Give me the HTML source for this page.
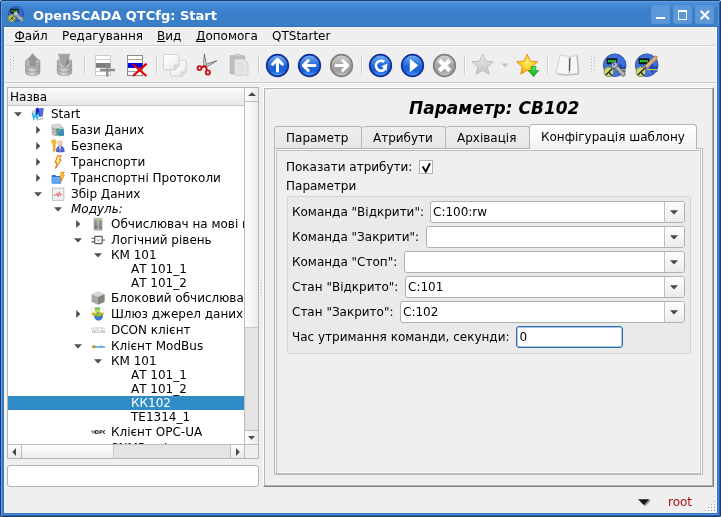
<!DOCTYPE html>
<html><head><meta charset="utf-8"><title>OpenSCADA QTCfg: Start</title>
<style>
html,body{margin:0;padding:0;}
body{width:721px;height:517px;overflow:hidden;background:#fff;font-family:"DejaVu Sans","Liberation Sans",sans-serif;font-size:12px;color:#000;position:relative;}
.abs{position:absolute;}
#root{position:absolute;left:0;top:0;width:721px;height:517px;will-change:transform;}
.t{position:absolute;white-space:nowrap;line-height:16px;height:16px;}
svg{display:block;}
u{text-decoration:underline;text-decoration-skip-ink:none;text-underline-offset:1px;}
#frame{left:0;top:0;width:721px;height:517px;background:#3a7ec8;border-radius:3px 3px 2px 2px;overflow:hidden;}
#titlebar{left:0;top:0;width:721px;height:27px;background:linear-gradient(#4a90dc 2px,#3b7fca 11px,#3a7ec8 26px,#2e74c4 26px);}
#title{left:33px;top:8px;color:#fff;font-weight:bold;font-size:13px;}
.wbtn{top:4.500px;width:19.600px;height:19.600px;border:0;box-shadow:inset 0 0 0 1px #5a93d4;border-radius:3.500px;background:#5e97d7;box-sizing:border-box;}
#client{left:4px;top:27px;width:713px;height:486px;background:#efefef;box-sizing:border-box;border:1px solid #f8f6f4;}
.menu{top:28px;}
.frame{box-sizing:border-box;border:1px solid #b6b6b6;}
.combo{position:absolute;box-sizing:border-box;height:22px;border:1px solid #b0b0b0;border-radius:3px;background:#fff;}
.combo .btn{position:absolute;right:0;top:0;width:19px;height:20px;border-left:1px solid #c0c0c0;background:linear-gradient(#fdfdfd,#ececec);border-radius:0 2px 2px 0;}
.combo .btn svg{position:absolute;left:4.500px;top:8px;}
.combo span{position:absolute;left:2px;top:2px;line-height:16px;}
</style></head><body>
<div id="root">
<div class="abs" id="frame">
<div class="abs" id="titlebar"></div>
<div class="abs" style="left:0;top:0;width:721px;height:1px;background:#1c3d6a"></div>
<div class="abs" style="left:1px;top:1px;width:719px;height:1px;background:#62a4ea"></div>
<div class="abs" style="left:3px;top:27px;width:1px;height:487px;background:#2e74c4"></div>
<div class="abs" style="left:2px;top:3px;width:1px;height:512px;background:#3a80cc"></div>
<div class="abs" style="left:1px;top:1px;width:1px;height:515px;background:#5e9fe6"></div>
<div class="abs" style="left:717px;top:27px;width:1px;height:487px;background:#2e74c4"></div>
<div class="abs" style="left:4px;top:513px;width:714px;height:1px;background:#2e74c4"></div>
<div class="abs" style="left:718px;top:3px;width:1px;height:512px;background:#4a90dc"></div>
<div class="abs" style="left:3px;top:514px;width:716px;height:1px;background:#4a90dc"></div>
<div class="abs" style="left:719px;top:2px;width:1px;height:514px;background:#2b5c9c"></div>
<div class="abs" style="left:2px;top:515px;width:718px;height:1px;background:#2b5c9c"></div>
<div class="abs" style="left:0;top:0;width:1px;height:517px;background:#1c3d6a"></div>
<div class="abs" style="left:720px;top:0;width:1px;height:517px;background:#1c3d6a"></div>
<div class="abs" style="left:0;top:516px;width:721px;height:1px;background:#1c3d6a"></div>
</div>
<!-- app icon -->
<svg class="abs" style="left:7px;top:5px" width="18" height="18" viewBox="0 0 18 18"><circle cx="9" cy="9" r="7.600" fill="#3566d6" stroke="#2a4a9c" stroke-width=".8"/><rect x="3.400" y="3.700" width="8.400" height="4.800" rx=".8" fill="#0c1a10"/><path d="M4.600 6h6" stroke="#30d040" stroke-width="1.500" stroke-dasharray="1.600 .6"/><circle cx="4.700" cy="13.300" r="3.600" fill="#b6c25c" stroke="#7a8438" stroke-width=".6"/><path d="M2.600 15l4.200-3.600M4.700 13.300l2 1.800" stroke="#20281a" stroke-width=".9"/><path d="M9 9l5.800 6" stroke="#a4a4a4" stroke-width="2.800" stroke-linecap="round"/><circle cx="8.800" cy="8.800" r="2" fill="#c8c8c8" stroke="#8a8a8a" stroke-width=".5"/><path d="M11 13h5" stroke="#e0e040" stroke-width=".8"/></svg>
<div class="t" id="title">OpenSCADA QTCfg: Start</div>
<div class="abs wbtn" style="left:650.700px"><div class="abs" style="left:5.300px;top:12.500px;width:9px;height:2.300px;background:#fff"></div></div>
<div class="abs wbtn" style="left:672.600px"><div class="abs" style="left:5.300px;top:5.500px;width:9px;height:9.500px;box-sizing:border-box;border:1.300px solid #fff;border-top-width:2.200px"></div></div>
<div class="abs wbtn" style="left:694.600px"><svg class="abs" style="left:5.200px;top:5.500px" width="10" height="10" viewBox="0 0 10 10"><path d="M0.700 0.700l8.300 8.600M9 0.700l-8.300 8.600" stroke="#fff" stroke-width="2"/></svg></div>
<div class="abs" id="client"></div>
<!-- menubar -->
<div class="t menu" style="left:14.500px"><u>Ф</u>айл</div>
<div class="t menu" style="left:62px">Редагування</div>
<div class="t menu" style="left:157px"><u>В</u>ид</div>
<div class="t menu" style="left:196px"><u>Д</u>опомога</div>
<div class="t menu" style="left:272px">QTStarter</div>
<div class="abs" style="left:5px;top:45px;width:711px;height:1px;background:#d4d4d4"></div>
<div class="abs" style="left:5px;top:46px;width:711px;height:1px;background:#fbfbfb"></div>
<!-- toolbar -->
<svg class="abs" style="left:4px;top:47px" width="712" height="35" viewBox="4 47 712 35">
<defs>
<linearGradient id="gcyl" x1="0" x2="1" y1="0" y2="0"><stop offset="0" stop-color="#a4a4a4"/><stop offset=".45" stop-color="#d6d6d6"/><stop offset="1" stop-color="#989898"/></linearGradient>
<linearGradient id="gblue" x1="0" x2="0" y1="0" y2="1"><stop offset="0" stop-color="#78b0f4"/><stop offset=".5" stop-color="#2368d8"/><stop offset=".75" stop-color="#1a60d8"/><stop offset="1" stop-color="#4aa4f8"/></linearGradient>
<linearGradient id="ggrey" x1="0" x2="0" y1="0" y2="1"><stop offset="0" stop-color="#d4d4d4"/><stop offset=".5" stop-color="#a4a4a4"/><stop offset=".75" stop-color="#a0a0a0"/><stop offset="1" stop-color="#cccccc"/></linearGradient>
<radialGradient id="gstar" cx=".5" cy=".4" r=".6"><stop offset="0" stop-color="#fff460"/><stop offset=".5" stop-color="#ffd030"/><stop offset="1" stop-color="#f89808"/></radialGradient><linearGradient id="ggreen" x1="0" x2="0" y1="0" y2="1"><stop offset="0" stop-color="#58e860"/><stop offset="1" stop-color="#08a818"/></linearGradient>
<linearGradient id="gstarg" x1="0" x2="0" y1="0" y2="1"><stop offset="0" stop-color="#ececec"/><stop offset="1" stop-color="#c4c4c4"/></linearGradient>
<linearGradient id="gpage" x1="0" x2="1" y1="0" y2="1"><stop offset="0" stop-color="#ffffff"/><stop offset=".6" stop-color="#f4f4f4"/><stop offset="1" stop-color="#dcdcdc"/></linearGradient>
</defs>
<!-- handle 1 -->
<g fill="#b8b8b8"><rect x="10" y="56" width="1" height="1"/><rect x="13" y="57" width="1" height="1"/><rect x="10" y="59" width="1" height="1"/><rect x="13" y="60" width="1" height="1"/><rect x="10" y="62" width="1" height="1"/><rect x="13" y="63" width="1" height="1"/><rect x="10" y="65" width="1" height="1"/><rect x="13" y="66" width="1" height="1"/><rect x="10" y="68" width="1" height="1"/><rect x="13" y="69" width="1" height="1"/><rect x="10" y="71" width="1" height="1"/></g>
<!-- db up -->
<g>
<path d="M25.500 61v11.500c0 1.900 3.200 3.300 7.200 3.300s7.200-1.400 7.200-3.300V61z" fill="url(#gcyl)" stroke="#9a9a9a" stroke-width=".6"/>
<ellipse cx="32.700" cy="61" rx="7.200" ry="2.600" fill="#c4c4c4" stroke="#9a9a9a" stroke-width=".6"/>
<path d="M25.500 65c0 1.900 3.200 3.100 7.200 3.100s7.200-1.200 7.200-3.100M25.500 69c0 1.900 3.200 3.100 7.200 3.100s7.200-1.200 7.200-3.100" fill="none" stroke="#929292" stroke-width=".8"/>
<path d="M32.600 53.600l6 6.800h-2.800v6.400h-6.400v-6.400h-2.800z" fill="#959595" stroke="#a8a8a8" stroke-width=".5"/>
</g>
<!-- db down -->
<g>
<path d="M57.300 61v11.500c0 1.900 3.200 3.300 7.200 3.300s7.200-1.400 7.200-3.300V61z" fill="url(#gcyl)" stroke="#9a9a9a" stroke-width=".6"/>
<ellipse cx="64.500" cy="61" rx="7.200" ry="2.600" fill="#bcbcbc" stroke="#9a9a9a" stroke-width=".6"/>
<path d="M57.300 65c0 1.900 3.200 3.100 7.200 3.100s7.200-1.200 7.200-3.100M57.300 69c0 1.900 3.200 3.100 7.200 3.100s7.200-1.200 7.200-3.100" fill="none" stroke="#929292" stroke-width=".8"/>
<path d="M58 54h12.200l-2.400 6.200 2.200 0.800-5.400 7.200-5.600-7.200 1.600-.6z" fill="#a2a2a2" stroke="#b4b4b4" stroke-width=".5"/>
<path d="M68.600 54.500l-3.800 13.200 5-6.800-2-.6z" fill="#7e7e7e"/>
</g>
<rect x="84" y="56" width="1" height="18" fill="#cfcfcf"/><rect x="85" y="56" width="1" height="18" fill="#fbfbfb"/>
<!-- add row -->
<g>
<rect x="95.500" y="55.500" width="15" height="20" fill="#fff" stroke="#cccccc"/>
<path d="M95.500 59.500h15M95.500 63.500h15M95.500 67.500h15M95.500 71.500h15" stroke="#cccccc"/>
<rect x="96" y="63" width="14.500" height="4.800" fill="#7e7e7e"/>
<path d="M100 70h15M107.300 64v12.600" stroke="#8e8e8e" stroke-width="2.400"/>
</g>
<!-- del row -->
<g>
<rect x="127.500" y="55.500" width="15" height="20" fill="#fff" stroke="#8a8a8a"/>
<path d="M127.500 59.500h15M127.500 63.500h15M127.500 67.500h15M127.500 71.500h15" stroke="#a0a0a0"/>
<rect x="128" y="63" width="14.500" height="4.800" fill="#0000e6"/>
<path d="M132.800 64l13.600 12M146.600 63.600l-13.600 12.400" stroke="#e60000" stroke-width="2.200"/>
</g>
<rect x="156" y="56" width="1" height="18" fill="#cfcfcf"/><rect x="157" y="56" width="1" height="18" fill="#fbfbfb"/>
<!-- copy -->
<g stroke="#cecece" stroke-width=".8">
<path d="M171.500 61.500h15v11l-4.500 4h-10.500z" fill="#c8c8c8" stroke="none" opacity=".5"/>
<path d="M170.500 60.500h15.500v11.500l-4.500 4h-11z" fill="url(#gpage)"/>
<path d="M181.500 76v-4h4.500" fill="#dedede"/>
<path d="M164.500 55.500h15v10.500l-4.500 4.500h-10.500z" fill="#c8c8c8" stroke="none" opacity=".5"/>
<path d="M163.500 54.500h15.500v10.500l-4.500 4.500h-11z" fill="url(#gpage)"/>
<path d="M174.500 69.500v-4.500h4.500" fill="#dcdcdc"/>
</g>
<!-- scissors -->
<g>
<path d="M204.400 54l2.200 11.200-1.400 1.600-1.800-1.400z" fill="#dcdcdc" stroke="#505050" stroke-width=".7" stroke-linejoin="round"/>
<path d="M216.800 60.800l-10.400 6.400-1.600-1.200 3-2.400z" fill="#d4d4d4" stroke="#505050" stroke-width=".7" stroke-linejoin="round"/>
<path d="M201.600 67.200l4.400-1.200M207 70l-1.600-4.200" stroke="#c80c16" stroke-width="2"/>
<circle cx="199.500" cy="68.100" r="2" fill="none" stroke="#c80c16" stroke-width="1.800"/>
<circle cx="207.800" cy="72.400" r="2.100" fill="none" stroke="#c80c16" stroke-width="1.800"/>
</g>
<!-- paste -->
<g>
<rect x="230" y="55.500" width="15" height="18.500" rx="1" fill="#bebebe" stroke="#b0b0b0" stroke-width=".6"/>
<rect x="234.500" y="54.300" width="6" height="2.500" rx="1" fill="#d0d0d0" stroke="#b0b0b0" stroke-width=".5"/>
<path d="M234.500 59h9l4.500 3.500v12.800h-13.500z" fill="#e6e6e6" stroke="#c2c2c2" stroke-width=".6"/>
<path d="M237 63.500h6M237 66h8.500M237 68.500h8.500M237 71h8.500" stroke="#d4d4d4" stroke-width=".7"/>
</g>
<rect x="258" y="56" width="1" height="18" fill="#cfcfcf"/><rect x="259" y="56" width="1" height="18" fill="#fbfbfb"/>
<!-- up -->
<g>
<circle cx="277.500" cy="65.500" r="10.800" fill="url(#gblue)" stroke="#12309a" stroke-width="1.700"/>
<path d="M277.500 60v11M272.600 64.200l4.900-4.900 4.900 4.900" fill="none" stroke="#fff" stroke-width="3" stroke-linecap="round" stroke-linejoin="round"/>
</g>
<!-- left -->
<g>
<circle cx="309.500" cy="65.500" r="10.800" fill="url(#gblue)" stroke="#12309a" stroke-width="1.700"/>
<path d="M304 65.500h11M308.200 60.600l-4.900 4.900 4.900 4.900" fill="none" stroke="#fff" stroke-width="3" stroke-linecap="round" stroke-linejoin="round"/>
</g>
<!-- right grey -->
<g>
<circle cx="341.500" cy="65.500" r="10.800" fill="url(#ggrey)" stroke="#808080" stroke-width="1.700"/>
<path d="M336 65.500h11M342.800 60.600l4.900 4.900-4.900 4.900" fill="none" stroke="#fff" stroke-width="3" stroke-linecap="round" stroke-linejoin="round"/>
</g>
<rect x="361" y="56" width="1" height="18" fill="#cfcfcf"/><rect x="362" y="56" width="1" height="18" fill="#fbfbfb"/>
<!-- refresh -->
<g>
<circle cx="380.500" cy="65.500" r="10.800" fill="url(#gblue)" stroke="#12309a" stroke-width="1.700"/>
<path d="M384.200 61.900A5 5 0 1 0 384.600 69.200" fill="none" stroke="#fff" stroke-width="2.700"/>
<path d="M381.400 66.300l6-2.800-.8 7.400z" fill="#fff"/>
</g>
<!-- play -->
<g>
<circle cx="412.500" cy="65.500" r="10.800" fill="url(#gblue)" stroke="#12309a" stroke-width="1.700"/>
<path d="M409.800 58.800l8.400 6.700-8.400 6.700z" fill="#fff"/>
</g>
<!-- stop grey -->
<g>
<circle cx="444.500" cy="65.500" r="10.800" fill="url(#ggrey)" stroke="#808080" stroke-width="1.700"/>
<path d="M439.300 60.300l10.400 10.400M449.700 60.300l-10.400 10.400" fill="none" stroke="#fff" stroke-width="4.400"/>
</g>
<rect x="464" y="56" width="1" height="18" fill="#cfcfcf"/><rect x="465" y="56" width="1" height="18" fill="#fbfbfb"/>
<!-- star grey -->
<path d="M482.600 54.200l3 6.900 7.500.7-5.700 5 1.700 7.400-6.500-3.900-6.500 3.900 1.700-7.400-5.700-5 7.500-.7z" fill="url(#gstarg)" stroke="#b8b8b8" stroke-width=".9" stroke-linejoin="round"/>
<path d="M501.500 63.500h7l-3.500 3.700z" fill="#c2c2c2"/>
<!-- star yellow -->
<path d="M527.200 54.200l3 6.900 7.500.7-5.700 5 1.700 7.400-6.500-3.900-6.500 3.900 1.700-7.400-5.700-5 7.500-.7z" fill="url(#gstar)" stroke="#e88a10" stroke-width=".9" stroke-linejoin="round"/>
<path d="M531.200 66.400h4.600v4.200h2.800l-5.100 6-5.100-6h2.800z" fill="url(#ggreen)" stroke="#0c9018" stroke-width=".7" stroke-linejoin="round"/>
<rect x="547" y="56" width="1" height="18" fill="#cfcfcf"/><rect x="548" y="56" width="1" height="18" fill="#fbfbfb"/>
<!-- book -->
<g>
<path d="M556 74.800l11 1 11.600-1.200-.6-3z" fill="#b4b4b4"/>
<path d="M560.200 55l9.600 1.600 7.400-1 1.200 17.600-10.400 1.400-12.200-1.400z" fill="#f6f6f6" stroke="#cccccc" stroke-width=".8"/>
<path d="M577.200 55.800l1.400 17.600" stroke="#b8b8b8" stroke-width="1.300"/>
<path d="M569.800 57l-.6 16.600" stroke="#d0d0d0" stroke-width="2.400"/>
<path d="M569.900 58l-.4 13" stroke="#383838" stroke-width=".9"/>
</g>
<!-- handle 2 -->
<g fill="#b8b8b8"><rect x="591" y="56" width="1" height="1"/><rect x="594" y="57" width="1" height="1"/><rect x="591" y="59" width="1" height="1"/><rect x="594" y="60" width="1" height="1"/><rect x="591" y="62" width="1" height="1"/><rect x="594" y="63" width="1" height="1"/><rect x="591" y="65" width="1" height="1"/><rect x="594" y="66" width="1" height="1"/><rect x="591" y="68" width="1" height="1"/><rect x="594" y="69" width="1" height="1"/><rect x="591" y="71" width="1" height="1"/></g>
<!-- app icon 1 -->
<g>
<circle cx="614.7" cy="65.200" r="11.300" fill="#3f70de" stroke="#2c50ac" stroke-width=".9"/>
<path d="M618 66l3-2.500 1.500 4 3-3v8l-3-2.500-1.500 3.500-3-3z" fill="#2448b0"/>
<rect x="606.8" y="58.200" width="10.400" height="6" rx=".6" fill="#0c160e"/>
<path d="M608 61.200h8" stroke="#2fd83c" stroke-width="2.200" stroke-dasharray="1.700 .5"/>
<path d="M615 69.700h11" stroke="#e6e63c" stroke-width="1"/>
<circle cx="608.8" cy="71.800" r="4.800" fill="#ccd678" stroke="#7e8a3c" stroke-width=".8"/>
<path d="M605.6 75.200l6.600-6.400M608.8 72l3 3.600" stroke="#20241a" stroke-width="1.200"/>
<path d="M615.2 65.800l8 8.400" stroke="#505050" stroke-width="4.600" stroke-linecap="round"/>
<path d="M615.2 65.800l8 8.400" stroke="#b4b4b4" stroke-width="3.200" stroke-linecap="round"/>
<circle cx="614.4" cy="65" r="3.100" fill="#c0c0c0" stroke="#585858" stroke-width=".7"/>
<path d="M612.2 62.400l2.600 2.800" stroke="#3f70de" stroke-width="2"/>
</g>
<!-- app icon 2 -->
<g>
<circle cx="646.7" cy="65.200" r="11.300" fill="#3f70de" stroke="#2c50ac" stroke-width=".9"/>
<path d="M650 66l3-2.500 1.500 4 3-3v8l-3-2.500-1.500 3.500-3-3z" fill="#2448b0"/>
<rect x="638.8" y="58.200" width="10.400" height="6" rx=".6" fill="#0c160e"/>
<path d="M640 61.200h8" stroke="#2fd83c" stroke-width="2.200" stroke-dasharray="1.700 .5"/>
<path d="M647 69.700h11" stroke="#e6e63c" stroke-width="1"/>
<circle cx="640.8" cy="71.800" r="4.800" fill="#ccd678" stroke="#7e8a3c" stroke-width=".8"/>
<path d="M637.6 75.200l6.600-6.400M640.8 72l3 3.600" stroke="#20241a" stroke-width="1.200"/>
<path d="M645.6 67.400l10-9.600" stroke="#a07848" stroke-width="4.200" stroke-linecap="round"/>
<path d="M645.6 67.400l10-9.600" stroke="#d8b088" stroke-width="2.800" stroke-linecap="round"/>
<path d="M644 69.200l1.200-2.600 1.600 1.600z" fill="#303030"/>
</g>
</svg>

<div class="abs" style="left:5px;top:82px;width:711px;height:1px;background:#c8c8c8"></div>
<div class="abs" style="left:5px;top:83px;width:711px;height:1px;background:#f9f9f9"></div>
<!-- left tree -->
<div class="abs frame" style="left:7px;top:87px;width:252px;height:372px;background:#fff"></div>
<div class="abs" style="left:8px;top:88px;width:236px;height:17px;background:linear-gradient(#fcfcfc,#f2f2f2 50%,#e6e6e6);border-bottom:1px solid #c4c4c4"></div>
<div class="t" style="left:10px;top:89px">Назва</div>
<div class="abs" id="tree" style="left:8px;top:106px;width:236px;height:338px;overflow:hidden;background:#fff">
<svg class="abs" style="left:6px;top:6px" width="8" height="5" viewBox="0 0 8 5"><path d="M0 0.200h8L4 4.400z" fill="#505050"/></svg>
<div class="abs" style="left:23px;top:1px;width:14px;height:14px"><svg width="14" height="14" viewBox="0 0 16 16"><path d="M1 4l6-1.500v8L1 12z" fill="#d4d4d8"/><path d="M8 13.500l6-1.500v2l-6 1z" fill="#c0c0c4"/><path d="M5.500 1.500L8 0.500l2.500 4.500v7L8 8 5.500 10z" fill="#1228c0"/><path d="M9 1.500l5.500-.5-1 9.500-3.500 1z" fill="#4f6ce0"/><path d="M1.500 6.500l1.800 7 1.900-5 1.900 5 1.800-7" fill="none" stroke="#20b4e8" stroke-width="1.500"/></svg></div>
<div class="t" style="left:43px;top:0px;">Start</div>
<svg class="abs" style="left:28px;top:20px" width="5" height="8" viewBox="0 0 5 8"><path d="M0.200 0v8L4.400 4z" fill="#505050"/></svg>
<div class="abs" style="left:43px;top:17px;width:14px;height:14px"><svg width="14" height="14" viewBox="0 0 16 16"><path d="M0.800 4v8c0 1.600 2.600 2.800 5.800 2.800s5.800-1.200 5.800-2.800V4z" fill="#a8a8a8"/><path d="M0.800 6.800c0 1.600 2.600 2.600 5.800 2.600s5.800-1 5.800-2.600M0.800 9.800c0 1.600 2.600 2.600 5.800 2.600s5.800-1 5.800-2.600" fill="none" stroke="#e0e0e0" stroke-width=".8"/><ellipse cx="6.600" cy="4" rx="5.800" ry="2.600" fill="#d8d8d8" stroke="#9a9a9a" stroke-width=".5"/><path d="M6 6.500l8-1.500 0.500 7-8 2z" fill="#3fa84c"/><path d="M8.500 7.500l6-1 .5 8-6 .5z" fill="#3a8cb4"/><path d="M6.500 9l4.500-1v2.500l-4.500 1z" fill="#6a8cd8"/><path d="M9 6l5.500-1v1.300l-5.500 1z" fill="#b8d8ec"/></svg></div>
<div class="t" style="left:63px;top:16px;">Бази Даних</div>
<svg class="abs" style="left:28px;top:36px" width="5" height="8" viewBox="0 0 5 8"><path d="M0.200 0v8L4.400 4z" fill="#505050"/></svg>
<div class="abs" style="left:43px;top:33px;width:14px;height:14px"><svg width="14" height="14" viewBox="0 0 16 16"><path d="M3.300 0.800c1.600 0 2.700 1 2.700 2.300 0 1-.5 1.700-1.300 2.100v8.300l-1.200 1-1.300-1V12l.8-.7-.8-.8.800-.8-.8-.8V5.200C1.300 4.800.6 4.100.6 3.100.6 1.800 1.700.8 3.300.8z" fill="#f8c020" stroke="#c88a00" stroke-width=".6"/><circle cx="10.300" cy="4.600" r="2.700" fill="#f6d4b0" stroke="#c89868" stroke-width=".5"/><path d="M6 14.200c0-4 1.600-6.200 4.500-6.200s4.700 2.200 4.700 6.200c-1.500 1-7.700 1-9.200 0z" fill="#3c6ce0" stroke="#2040b0" stroke-width=".6"/><path d="M9.300 8.300h2l-.3 5.700h-1.400z" fill="#f4f4f4"/><path d="M10.300 8.600l.8 4.800-.8.900-.8-.9z" fill="#d82020"/></svg></div>
<div class="t" style="left:63px;top:32px;">Безпека</div>
<svg class="abs" style="left:28px;top:52px" width="5" height="8" viewBox="0 0 5 8"><path d="M0.200 0v8L4.400 4z" fill="#505050"/></svg>
<div class="abs" style="left:43px;top:49px;width:14px;height:14px"><svg width="14" height="14" viewBox="0 0 16 16"><path d="M7.500 0.800h4.200l-2.400 4.700h2.600L5.200 15.400l1.600-6.600H4.600z" fill="#fce040" stroke="#e06418" stroke-width="1"/><path d="M8.200 2h2l-2.200 4.500h1.800L7 11l.8-3.400H6.200z" fill="#fff8b0"/></svg></div>
<div class="t" style="left:63px;top:48px;">Транспорти</div>
<svg class="abs" style="left:28px;top:68px" width="5" height="8" viewBox="0 0 5 8"><path d="M0.200 0v8L4.400 4z" fill="#505050"/></svg>
<div class="abs" style="left:43px;top:65px;width:14px;height:14px"><svg width="14" height="14" viewBox="0 0 16 16"><path d="M0.800 5.500c0-.6.400-1 1-1h3l1 1.200h5.500v8.500H0.800z" fill="#2a6cd8"/><path d="M0.500 7.200h11.800l-.8 7.300H1.300z" fill="#5ea4f4"/><path d="M1 8l10.800-.3" stroke="#9cc8fc" stroke-width=".8"/><path d="M11.800 1.200h3.400l-1.800 3.800h2L10.600 13l1.300-5h-1.700z" fill="#fcd030" stroke="#e07018" stroke-width=".8"/></svg></div>
<div class="t" style="left:63px;top:64px;">Транспортні Протоколи</div>
<svg class="abs" style="left:26px;top:86px" width="8" height="5" viewBox="0 0 8 5"><path d="M0 0.200h8L4 4.400z" fill="#505050"/></svg>
<div class="abs" style="left:43px;top:81px;width:14px;height:14px"><svg width="14" height="14" viewBox="0 0 16 16"><rect x="1.700" y="1.200" width="13" height="14" fill="#f0f0f0" stroke="#b0b0b0" stroke-width=".9"/><path d="M3 9.500l1.500-1 1 1.500 1.500-3 1.200 4 1.300-5.500 1.300 4.500 1-2 1 1" fill="none" stroke="#e04050" stroke-width=".8"/></svg></div>
<div class="t" style="left:63px;top:80px;">Збір Даних</div>
<svg class="abs" style="left:46px;top:101px" width="8" height="5" viewBox="0 0 8 5"><path d="M0 0.200h8L4 4.400z" fill="#505050"/></svg>
<div class="t" style="left:63px;top:95px;font-style:italic;">Модуль:</div>
<svg class="abs" style="left:68px;top:114px" width="5" height="8" viewBox="0 0 5 8"><path d="M0.200 0v8L4.400 4z" fill="#505050"/></svg>
<div class="abs" style="left:83px;top:111px;width:14px;height:14px"><svg width="14" height="14" viewBox="0 0 16 16"><rect x="3.200" y="1.200" width="9.600" height="14" fill="#a6a6a6" stroke="#c4c4c4" stroke-width=".6"/><rect x="3.800" y="1.600" width="8.400" height="2" fill="#a8d090"/><path d="M5 4.500v9M7 4.500v9M9.400 4.500v9M11.400 4.500v9" stroke="#7c7c7c" stroke-width="1"/><path d="M8.200 4v10" stroke="#e0e0e0" stroke-width=".8"/><path d="M4 11.500h4M10 12.500h2" stroke="#606060" stroke-width="1.200"/></svg></div>
<div class="t" style="left:103px;top:110px;">Обчислювач на мові подібній до Java</div>
<svg class="abs" style="left:66px;top:132px" width="8" height="5" viewBox="0 0 8 5"><path d="M0 0.200h8L4 4.400z" fill="#505050"/></svg>
<div class="abs" style="left:83px;top:127px;width:14px;height:14px"><svg width="14" height="14" viewBox="0 0 16 16"><rect x="4.200" y="3.800" width="8.600" height="8.400" rx="1" fill="#f4f4f4" stroke="#585858" stroke-width="1.300"/><path d="M0.500 6h4M0.500 10.200h4M12.800 8h3.200" stroke="#585858" stroke-width="1.300"/><path d="M7 7.500c.5 1.500 2.500 1.500 3 0" fill="none" stroke="#707070" stroke-width=".8"/></svg></div>
<div class="t" style="left:103px;top:126px;">Логічний рівень</div>
<svg class="abs" style="left:86px;top:147px" width="8" height="5" viewBox="0 0 8 5"><path d="M0 0.200h8L4 4.400z" fill="#505050"/></svg>
<div class="t" style="left:103px;top:141px;">КМ 101</div>
<div class="t" style="left:123px;top:155px;">АТ 101_1</div>
<div class="t" style="left:123px;top:169px;">АТ 101_2</div>
<div class="abs" style="left:83px;top:185px;width:14px;height:14px"><svg width="14" height="14" viewBox="0 0 16 16"><path d="M8 0.600l7.400 3.200v8.400L8 15.600 0.600 12.200V3.800z" fill="#a8a8a4"/><path d="M8 0.600l7.400 3.200L8 7.200 0.600 3.800z" fill="#d6d6d2"/><path d="M8 7.200l7.400-3.400v8.400L8 15.600z" fill="#84847f"/></svg></div>
<div class="t" style="left:103px;top:184px;">Блоковий обчислювач</div>
<svg class="abs" style="left:68px;top:204px" width="5" height="8" viewBox="0 0 5 8"><path d="M0.200 0v8L4.400 4z" fill="#505050"/></svg>
<div class="abs" style="left:83px;top:201px;width:14px;height:14px"><svg width="14" height="14" viewBox="0 0 16 16"><rect x="0.500" y="0.500" width="14" height="9" fill="none" stroke="#f8c8d8" stroke-width=".5"/><circle cx="8.600" cy="10.600" r="5" fill="#3c78d8"/><path d="M5 10c1.500-2 4.500-2.500 6.500-.5-1 2.500-4.500 3.500-6.500.5z" fill="#58b048"/><rect x="4.200" y="0.600" width="6.200" height="2.600" fill="#50d040"/><rect x="4.200" y="3.400" width="6.200" height="2.400" fill="#c8dc50"/><rect x="0.800" y="6.400" width="13.600" height="3" fill="#d0d428"/><path d="M2 8h2.500M6 8h3.500M11 8h2.500" stroke="#787818" stroke-width="1"/></svg></div>
<div class="t" style="left:103px;top:200px;">Шлюз джерел даних</div>
<div class="abs" style="left:83px;top:217px;width:14px;height:14px"><svg width="14" height="14" viewBox="0 0 16 16"><text x="8.500" y="6.800" font-size="2.800" text-anchor="middle" fill="#a0a0a0" font-family="DejaVu Sans">ADVANTECH</text><text x="8.500" y="11.600" font-size="5" text-anchor="middle" fill="#8c8c8c" font-family="DejaVu Sans">DCON</text></svg></div>
<div class="t" style="left:103px;top:216px;">DCON клієнт</div>
<svg class="abs" style="left:66px;top:238px" width="8" height="5" viewBox="0 0 8 5"><path d="M0 0.200h8L4 4.400z" fill="#505050"/></svg>
<div class="abs" style="left:83px;top:233px;width:14px;height:14px"><svg width="14" height="14" viewBox="0 0 16 16"><circle cx="3" cy="8.800" r="2" fill="#f4a410"/><path d="M0.500 8.800h5" stroke="#f4a410" stroke-width="1"/><text x="10.500" y="10.200" font-size="3.600" text-anchor="middle" fill="#3c98dc" font-family="DejaVu Sans" font-weight="bold">Modbus</text><path d="M5 9h10.500" stroke="#58a8e4" stroke-width="1.300"/></svg></div>
<div class="t" style="left:103px;top:232px;">Клієнт ModBus</div>
<svg class="abs" style="left:86px;top:253px" width="8" height="5" viewBox="0 0 8 5"><path d="M0 0.200h8L4 4.400z" fill="#505050"/></svg>
<div class="t" style="left:103px;top:247px;">КМ 101</div>
<div class="t" style="left:123px;top:261px;">АТ 101_1</div>
<div class="t" style="left:123px;top:275px;">АТ 101_2</div>
<div class="abs" style="left:0;top:290px;width:236px;height:14px;background:#308cc6"></div>
<div class="t" style="left:123px;top:289px;color:#fff;">КК102</div>
<div class="t" style="left:123px;top:303px;">ТЕ1314_1</div>
<div class="abs" style="left:83px;top:319px;width:14px;height:14px"><svg width="14" height="14" viewBox="0 0 16 16"><path d="M0 7h6M1 9h5" stroke="#505050" stroke-width="1"/><text x="11" y="10.500" font-size="6" text-anchor="middle" fill="#101010" font-family="DejaVu Sans" font-weight="bold">OPC</text></svg></div>
<div class="t" style="left:103px;top:318px;">Клієнт OPC-UA</div>
<div class="abs" style="left:83px;top:335px;width:14px;height:14px"><svg width="14" height="14" viewBox="0 0 16 16"></svg></div>
<div class="t" style="left:103px;top:334px;">SNMP клієнт</div>
</div>
<!-- v scrollbar -->
<div class="abs" style="left:244px;top:88px;width:14px;height:356px;background:#e4e4e4;border-left:1px solid #bcbcbc;box-sizing:border-box"></div>
<div class="abs" style="left:245px;top:88px;width:13px;height:13px;background:linear-gradient(90deg,#fdfdfd,#eaeaea);border-bottom:1px solid #bcbcbc"><svg class="abs" style="left:2.500px;top:4px" width="8" height="4" viewBox="0 0 8 4"><path d="M0 4h8L4 0.200z" fill="#4a4a4a"/></svg></div>
<div class="abs" style="left:245px;top:102px;width:13px;height:225px;background:linear-gradient(90deg,#fdfdfd,#ececec);border-bottom:1px solid #c8c8c8"></div>
<div class="abs" style="left:245px;top:430px;width:13px;height:13px;background:linear-gradient(90deg,#fdfdfd,#eaeaea);border-top:1px solid #bcbcbc"><svg class="abs" style="left:3px;top:5px" width="7" height="4" viewBox="0 0 7 4"><path d="M0 0h7L3.500 3.800z" fill="#4a4a4a"/></svg></div>
<!-- splitter -->
<svg class="abs" style="left:261px;top:280px" width="1" height="16" viewBox="0 0 1 16"><g fill="#bdbdbd"><rect y="0" width="1" height="1"/><rect y="3" width="1" height="1"/><rect y="6" width="1" height="1"/><rect y="9" width="1" height="1"/><rect y="12" width="1" height="1"/><rect y="15" width="1" height="1"/></g></svg>
<!-- h scrollbar -->
<div class="abs" style="left:8px;top:444px;width:250px;height:14px;background:#efefef;border-top:1px solid #bcbcbc;box-sizing:border-box"></div>
<div class="abs" style="left:8px;top:445px;width:223px;height:13px;background:#e4e4e4"></div>
<div class="abs" style="left:8px;top:445px;width:13px;height:13px;background:linear-gradient(#fdfdfd,#eaeaea);border-right:1px solid #bcbcbc"><svg class="abs" style="left:4px;top:2.500px" width="4" height="8" viewBox="0 0 4 8"><path d="M4 0v8L0.200 4z" fill="#4a4a4a"/></svg></div>
<div class="abs" style="left:22px;top:445px;width:91px;height:13px;background:linear-gradient(#fdfdfd,#ececec);border-right:1px solid #c8c8c8"></div>
<div class="abs" style="left:230px;top:445px;width:13px;height:13px;background:linear-gradient(#fdfdfd,#eaeaea);border-left:1px solid #bcbcbc;border-right:1px solid #bcbcbc"><svg class="abs" style="left:4.500px;top:2.500px" width="4" height="8" viewBox="0 0 4 8"><path d="M0 0v8L3.800 4z" fill="#4a4a4a"/></svg></div>
<!-- left input -->
<div class="abs" style="left:7px;top:465px;width:252px;height:22px;box-sizing:border-box;border:1px solid #b4b4b4;border-radius:3px;background:#fff"></div>
<!-- right panel -->
<div class="abs" style="left:263px;top:87px;width:451px;height:400px;box-sizing:border-box;border:1px solid #fff;border-right-color:#7e7e7e;border-bottom-color:#7e7e7e"></div>
<div class="abs" style="left:264px;top:88px;width:449px;height:398px;box-sizing:border-box;border:1px solid #b8b8b8;border-right-color:#b0b0b0;border-bottom-color:#b0b0b0"></div>
<div class="t" style="left:409px;top:97px;font-size:17px;font-weight:bold;font-style:italic;line-height:22px;height:22px">Параметр: СВ102</div>
<!-- tab pane -->
<div class="abs" style="left:274px;top:148px;width:429px;height:327px;box-sizing:border-box;border:1px solid #b4b4b4;border-right-color:#bcbcbc;border-bottom-color:#bcbcbc;background:#fdfdfd"></div>
<div class="abs" style="left:276px;top:150px;width:425px;height:324px;box-sizing:border-box;border:1px solid #bcbcbc;background:#efefef;box-shadow:inset -1px -1px 0 #fbfbfb"></div>
<!-- tabs -->
<div class="abs tab" style="left:274px;top:126px;width:88px;height:22px;box-sizing:border-box;border:1px solid #b8b8b8;border-bottom:none;border-radius:3px 3px 0 0;background:linear-gradient(#ededed,#e6e6e6)"></div>
<div class="abs tab" style="left:362px;top:126px;width:84px;height:22px;box-sizing:border-box;border:1px solid #b8b8b8;border-left:none;border-bottom:none;border-radius:3px 3px 0 0;background:linear-gradient(#ededed,#e6e6e6)"></div>
<div class="abs tab" style="left:446px;top:126px;width:84px;height:22px;box-sizing:border-box;border:1px solid #b8b8b8;border-left:none;border-bottom:none;border-radius:3px 3px 0 0;background:linear-gradient(#ededed,#e6e6e6)"></div>
<div class="abs tab" style="left:529px;top:124px;width:168px;height:25px;box-sizing:border-box;border:1px solid #b4b4b4;border-bottom:none;border-radius:4px 4px 0 0;background:linear-gradient(#ffffff,#fafafa 50%,#f1f1f1)"></div>
<div class="t" style="left:286px;top:130px">Параметр</div>
<div class="t" style="left:373px;top:130px">Атрибути</div>
<div class="t" style="left:457px;top:130px">Архівація</div>
<div class="t" style="left:541px;top:129px">Конфігурація шаблону</div>
<!-- content -->
<div class="t" style="left:286px;top:159px">Показати атрибути:</div>
<div class="abs" style="left:419px;top:160px;width:14px;height:14px;box-sizing:border-box;border:1px solid #b2b2b2;background:#fff"><svg class="abs" style="left:0px;top:0px" width="12" height="12" viewBox="0 0 12 12"><path d="M2.600 5.600l3.200 5L10 2.300" fill="none" stroke="#000" stroke-width="1.900"/></svg></div>
<div class="t" style="left:286px;top:178px">Параметри</div>
<div class="abs" style="left:287px;top:196px;width:404px;height:158px;box-sizing:border-box;border:1px solid #d6d6d6;border-radius:2px;background:#eaeaea"></div>
<div class="t" style="left:292px;top:204px">Команда "Відкрити":</div>
<div class="combo" style="left:430px;top:201px;width:255px"><span>C:100:rw</span><div class="btn"><svg width="8" height="5" viewBox="0 0 8 5"><path d="M0 0.300h8L4 4.600z" fill="#484848"/></svg></div></div>
<div class="t" style="left:292px;top:229px">Команда "Закрити":</div>
<div class="combo" style="left:426px;top:226px;width:259px"><div class="btn"><svg width="8" height="5" viewBox="0 0 8 5"><path d="M0 0.300h8L4 4.600z" fill="#484848"/></svg></div></div>
<div class="t" style="left:292px;top:254px">Команда "Стоп":</div>
<div class="combo" style="left:404px;top:251px;width:281px"><div class="btn"><svg width="8" height="5" viewBox="0 0 8 5"><path d="M0 0.300h8L4 4.600z" fill="#484848"/></svg></div></div>
<div class="t" style="left:292px;top:279px">Стан "Відкрито":</div>
<div class="combo" style="left:405px;top:276px;width:280px"><span>C:101</span><div class="btn"><svg width="8" height="5" viewBox="0 0 8 5"><path d="M0 0.300h8L4 4.600z" fill="#484848"/></svg></div></div>
<div class="t" style="left:292px;top:304px">Стан "Закрито":</div>
<div class="combo" style="left:400px;top:301px;width:285px"><span>C:102</span><div class="btn"><svg width="8" height="5" viewBox="0 0 8 5"><path d="M0 0.300h8L4 4.600z" fill="#484848"/></svg></div></div>
<div class="t" style="left:292px;top:329px">Час утримання команди, секунди:</div>
<div class="abs" style="left:516px;top:326px;width:107px;height:22px;box-sizing:border-box;border:1px solid #2f70ac;border-radius:3px;background:#fff;box-shadow:inset 0 0 0 1px #a4c4e4"></div>
<div class="t" style="left:519.500px;top:329px">0</div>
<!-- status bar -->
<svg class="abs" style="left:704px;top:500px" width="13" height="13" viewBox="704 500 13 13"><rect x="715" y="502" width="1" height="1" fill="#fff"/><rect x="714" y="501" width="1" height="1" fill="#a4a4a4"/><rect x="712" y="505" width="1" height="1" fill="#fff"/><rect x="711" y="504" width="1" height="1" fill="#a4a4a4"/><rect x="715" y="505" width="1" height="1" fill="#fff"/><rect x="714" y="504" width="1" height="1" fill="#a4a4a4"/><rect x="709" y="508" width="1" height="1" fill="#fff"/><rect x="708" y="507" width="1" height="1" fill="#a4a4a4"/><rect x="712" y="508" width="1" height="1" fill="#fff"/><rect x="711" y="507" width="1" height="1" fill="#a4a4a4"/><rect x="715" y="508" width="1" height="1" fill="#fff"/><rect x="714" y="507" width="1" height="1" fill="#a4a4a4"/><rect x="706" y="511" width="1" height="1" fill="#fff"/><rect x="705" y="510" width="1" height="1" fill="#a4a4a4"/><rect x="709" y="511" width="1" height="1" fill="#fff"/><rect x="708" y="510" width="1" height="1" fill="#a4a4a4"/><rect x="712" y="511" width="1" height="1" fill="#fff"/><rect x="711" y="510" width="1" height="1" fill="#a4a4a4"/><rect x="715" y="511" width="1" height="1" fill="#fff"/><rect x="714" y="510" width="1" height="1" fill="#a4a4a4"/></svg>

<svg class="abs" style="left:638px;top:499px" width="13" height="8" viewBox="0 0 13 8"><path d="M2 1.500h11L7 7.500z" fill="#9a9a9a"/><path d="M0 0.300h11.600L5.800 6z" fill="#161616"/></svg>
<div class="t" style="left:668px;top:494px;color:#b01010">root</div>
</div>
</body></html>
